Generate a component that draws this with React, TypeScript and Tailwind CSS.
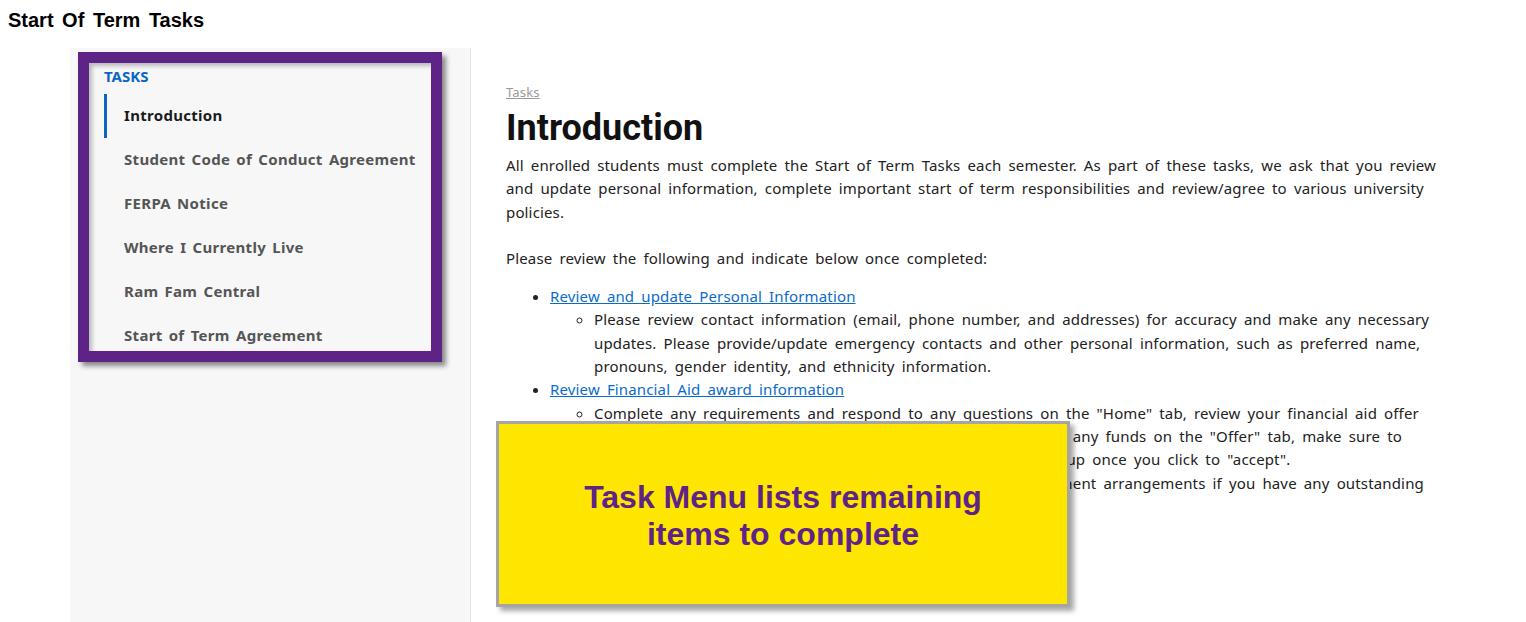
import React from "react";

const tasks = [
  "Introduction",
  "Student Code of Conduct Agreement",
  "FERPA Notice",
  "Where I Currently Live",
  "Ram Fam Central",
  "Start of Term Agreement",
];

export default function App() {
  return (
    <div className="relative h-[622px] overflow-hidden bg-white font-['Noto_Sans','Open_Sans',sans-serif] text-[#222]">
      <h1 className="h-12 pl-2 pt-[6px] font-['Liberation_Sans',Arial,sans-serif] text-[20px] font-bold leading-7 [word-spacing:3px] text-black">
        Start Of Term Tasks
      </h1>

      <div className="flex h-[574px]">
        <aside className="ml-[70px] w-[401px] shrink-0 border-r border-[#e3e3e3] bg-[#f7f7f7] pl-[34px] pt-[18px]">
          <div className="text-[15px] font-bold leading-5 text-[#0a66c2]">TASKS</div>
          <nav className="mt-2">
            {tasks.map((t, i) => (
              <div
                key={t}
                className={`flex h-11 items-center border-l-[3px] pb-[2px] pl-[17px] text-[15px] font-bold tracking-[0.3px] [word-spacing:2px] ${
                  i === 0 ? "border-[#0a66c2] text-[#1b1b1b]" : "border-transparent text-[#555]"
                }`}
              >
                {t}
              </div>
            ))}
          </nav>
        </aside>

        <main className="w-[975px] pl-[35px] pt-[35px] text-[15px] leading-[23.3px] tracking-[0.15px] [word-spacing:3px]">
          <a href="#" className="block text-[13px] leading-[18px] text-[#9a9a9a] underline">
            Tasks
          </a>
          <h2 className="mt-[5px] font-['Roboto',sans-serif] text-[36px] font-bold leading-[44px] tracking-normal [word-spacing:0] text-[#111]">
            Introduction
          </h2>
          <p className="mt-[4px]">
            All enrolled students must complete the Start of Term Tasks each semester. As part of these tasks, we ask
            that you review and update personal information, complete important start of term responsibilities and
            review/agree to various university policies.
          </p>
          <p className="mt-[23px]">Please review the following and indicate below once completed:</p>
          <ul className="mt-[15px] list-disc pl-[44px]">
            <li>
              <a href="#" className="text-[#0b6bcb] underline">
                Review and update Personal Information
              </a>
              <ul className="list-[circle] pl-[44px]">
                <li>
                  Please review contact information (email, phone number, and addresses) for accuracy and make any
                  necessary updates. Please provide/update emergency contacts and other personal information, such as
                  preferred name, pronouns, gender identity, and ethnicity information.
                </li>
              </ul>
            </li>
            <li>
              <a href="#" className="text-[#0b6bcb] underline">
                Review Financial Aid award information
              </a>
              <ul className="list-[circle] pl-[44px]">
                <li>
                  Complete any requirements and respond to any questions on the "Home" tab, review your financial aid
                  offer and award details on the "Summary" tab. If you are{" "}
                  <a href="#" className="text-[#0b6bcb] underline">
                    accepting
                  </a>{" "}
                  any funds on the "Offer" tab, make sure to complete additional loan requirements or steps that may
                  pop up once you click to "accept".
                </li>
                <li>
                  Review your Student Account on the "Pay" tab and make payment arrangements if you have any
                  outstanding balance.
                </li>
              </ul>
            </li>
          </ul>
        </main>
      </div>

      {/* purple frame around the task menu */}
      <div className="pointer-events-none absolute left-[78px] top-[52px] h-[310px] w-[364px] border-[11px] border-[#5e2386] shadow-[4px_4px_5px_rgba(0,0,0,0.45),inset_3px_3px_4px_rgba(0,0,0,0.25)]" />

      {/* callout */}
      <div className="absolute left-[496px] top-[421px] flex h-[186px] w-[574px] items-center justify-center border-[3px] border-[#a5a5a5] bg-[#ffe600] pt-[4px] shadow-[4px_4px_5px_rgba(0,0,0,0.35)]">
        <div className="text-center font-['Liberation_Sans',Arial,sans-serif] text-[32px] font-bold leading-[37px] text-[#5e2386]">
          Task Menu lists remaining
          <br />
          items to complete
        </div>
      </div>
    </div>
  );
}
